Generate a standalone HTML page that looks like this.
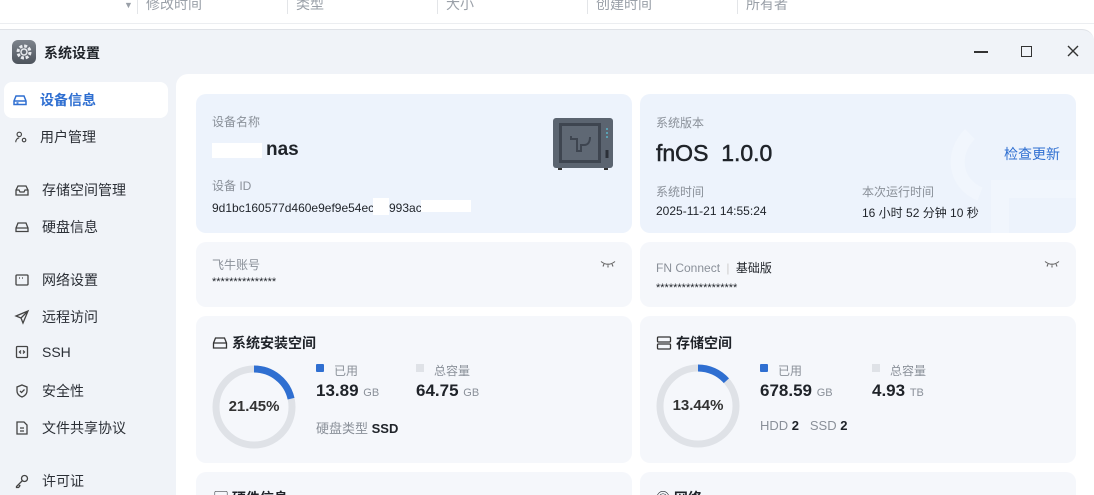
<!DOCTYPE html>
<html><head><meta charset="utf-8"><style>
*{margin:0;padding:0;box-sizing:border-box}
html,body{width:1094px;height:495px;overflow:hidden}
body{background:#fff;font-family:"Liberation Sans","Noto Sans CJK SC",sans-serif;position:relative;color:#1f2329}
.a{position:absolute}
.hd{top:-6px;font-size:14px;color:#9aa0a8}
.sep{top:0;width:1px;height:14px;background:#e3e5e8}
.win{left:0;top:29px;width:1094px;height:466px;background:#f0f3f8;border-top:1px solid #dfe2e7;border-top-right-radius:12px}
.nav{left:14px;font-size:14px;color:#2b2f36;display:flex;align-items:center}
.nav svg{margin-right:12px}
.main{left:176px;top:74px;width:918px;height:421px;background:#fff;border-top-left-radius:12px}
.card{border-radius:10px;background:#f5f7fb}
.blue{background:#edf3fc}
.lb{font-size:12px;color:#8a9099}
.v{font-size:12px;color:#1f2329}
</style></head><body>
<div class="a hd" style="left:146px">修改时间</div>
<div class="a hd" style="left:296px">类型</div>
<div class="a hd" style="left:446px">大小</div>
<div class="a hd" style="left:596px">创建时间</div>
<div class="a hd" style="left:746px">所有者</div>
<div class="a" style="left:124px;top:0;font-size:9px;color:#9aa0a8">▼</div>
<div class="a sep" style="left:137px"></div><div class="a sep" style="left:287px"></div><div class="a sep" style="left:437px"></div><div class="a sep" style="left:587px"></div><div class="a sep" style="left:737px"></div>
<div class="a" style="left:0;top:23px;width:1094px;height:1px;background:#eceef1"></div>
<div class="a win"></div>
<div class="a" style="left:12px;top:40px;width:24px;height:24px;border-radius:6px;background:linear-gradient(#7d838c,#4d535c)"><svg width="24" height="24" viewBox="0 0 24 24"><circle cx="12" cy="12" r="6" fill="none" stroke="#e8eaee" stroke-width="3" stroke-dasharray="3 1.7"/><circle cx="12" cy="12" r="3" fill="none" stroke="#e8eaee" stroke-width="1.5"/></svg></div>
<div class="a" style="left:44px;top:43px;font-size:14px;font-weight:bold">系统设置</div>
<div class="a" style="left:974px;top:51px;width:14px;height:1.5px;background:#333"></div>
<div class="a" style="left:1021px;top:46px;width:11px;height:11px;border:1.3px solid #333"></div>
<svg class="a" style="left:1067px;top:45px" width="12" height="12"><path d="M1 1L11 11M11 1L1 11" stroke="#333" stroke-width="1.4"/></svg>
<div class="a" style="left:4px;top:82px;width:164px;height:36px;background:#fff;border-radius:8px"></div>
<div class="a nav" style="top:90px;left:12px;color:#2f6fd1;font-weight:bold"><svg width="16" height="16" viewBox="0 0 16 16" fill="none" stroke="#2f6fd1" stroke-width="1.5"><path d="M2 9l2-5h8l2 5v3.5H2z M2 9h12"/><path d="M4.5 11h2"/></svg>设备信息</div>
<div class="a nav" style="top:127px"><svg width="14" height="16" viewBox="0 0 16 16" fill="none" stroke="#444" stroke-width="1.3"><circle cx="6" cy="5" r="2.5"/><path d="M2 14c0-3 2-5 4-5"/><circle cx="11.5" cy="11.5" r="2"/></svg>用户管理</div>
<div class="a nav" style="top:180px"><svg width="16" height="16" viewBox="0 0 16 16" fill="none" stroke="#444" stroke-width="1.3"><path d="M2 8l2-4h8l2 4v5H2z M2 8h3l1 2h4l1-2h3"/></svg>存储空间管理</div>
<div class="a nav" style="top:217px"><svg width="16" height="16" viewBox="0 0 16 16" fill="none" stroke="#444" stroke-width="1.3"><path d="M2 9l2-5h8l2 5v3.5H2z M2 9h12"/></svg>硬盘信息</div>
<div class="a nav" style="top:270px"><svg width="16" height="16" viewBox="0 0 16 16" fill="none" stroke="#444" stroke-width="1.3"><rect x="2" y="3" width="12" height="10" rx="1"/><path d="M5 6h1M8 6h1M11 6h0"/></svg>网络设置</div>
<div class="a nav" style="top:307px"><svg width="16" height="16" viewBox="0 0 16 16" fill="none" stroke="#444" stroke-width="1.3"><path d="M14 2L2 7l5 2 2 5z M7 9l7-7"/></svg>远程访问</div>
<div class="a nav" style="top:344px"><svg width="16" height="16" viewBox="0 0 16 16" fill="none" stroke="#444" stroke-width="1.3"><rect x="2.5" y="2.5" width="11" height="11" rx="1"/><path d="M7 6.5L5.5 8 7 9.5M9 6.5L10.5 8 9 9.5"/></svg>SSH</div>
<div class="a nav" style="top:381px"><svg width="16" height="16" viewBox="0 0 16 16" fill="none" stroke="#444" stroke-width="1.3"><path d="M8 2l5 2v4c0 3-2.5 5-5 6-2.5-1-5-3-5-6V4z"/><path d="M6 8l1.5 1.5L10.5 6.5"/></svg>安全性</div>
<div class="a nav" style="top:418px"><svg width="16" height="16" viewBox="0 0 16 16" fill="none" stroke="#444" stroke-width="1.3"><path d="M3 2h7l3 3v9H3z M6 8h4M6 11h4"/></svg>文件共享协议</div>
<div class="a nav" style="top:471px"><svg width="16" height="16" viewBox="0 0 16 16" fill="none" stroke="#444" stroke-width="1.3"><circle cx="10.5" cy="5.5" r="3"/><path d="M8.5 7.5L2.5 13.5v1h2l1-1v-1h1"/></svg>许可证</div>

<div class="a main"></div>
<div class="a card blue" style="left:196px;top:94px;width:436px;height:139px"></div>
<div class="a lb" style="left:212px;top:113px">设备名称</div>
<div class="a" style="left:266px;top:139px;font-size:19px;font-weight:bold">nas</div>
<div class="a" style="left:212px;top:143px;width:50px;height:15px;background:#fff"></div>
<div class="a lb" style="left:212px;top:177px">设备 ID</div>
<div class="a v" style="left:212px;top:201px">9d1bc160577d460e9ef9e54ec</div>
<div class="a" style="left:373px;top:198px;width:16px;height:17px;background:#fff"></div>
<div class="a v" style="left:389px;top:201px">993ac</div>
<div class="a" style="left:421px;top:200px;width:50px;height:12px;background:#fff"></div>
<svg class="a" style="left:550px;top:115px" width="66" height="56" viewBox="0 0 66 56"><rect x="3" y="3" width="60" height="50" rx="3" fill="#5b6470"/><rect x="9" y="8" width="42" height="40" fill="#3e4550"/><rect x="12" y="11" width="36" height="34" fill="#5f6874"/><path d="M21 21v3h6v12h4v-6h3c4 0 6-3 6-8" fill="none" stroke="#3e4550" stroke-width="2"/><circle cx="57" cy="14" r="1" fill="#5ab4c8"/><circle cx="57" cy="18" r="1" fill="#5ab4c8"/><circle cx="57" cy="22" r="1" fill="#5ab4c8"/><rect x="55.5" y="35" width="3" height="8" fill="#2b3038"/><rect x="8" y="53" width="4" height="2" fill="#333"/><rect x="54" y="53" width="4" height="2" fill="#333"/></svg>

<div class="a card blue" style="left:640px;top:94px;width:436px;height:139px;overflow:hidden"><svg class="a" style="left:300px;top:30px" width="140" height="110"><path d="M30 10c-20 20-15 50 10 60" fill="none" stroke="#f1f6fd" stroke-width="14"/><path d="M60 110V65h90" fill="none" stroke="#f1f6fd" stroke-width="18"/></svg></div>
<div class="a lb" style="left:656px;top:114px">系统版本</div>
<div class="a" style="left:656px;top:140px;font-size:23px;-webkit-text-stroke:0.5px #1f2329">fnOS&nbsp; 1.0.0</div>
<div class="a" style="left:1004px;top:144px;font-size:14px;color:#2f6fd1">检查更新</div>
<div class="a lb" style="left:656px;top:183px">系统时间</div>
<div class="a v" style="left:656px;top:204px">2025-11-21 14:55:24</div>
<div class="a lb" style="left:862px;top:183px">本次运行时间</div>
<div class="a v" style="left:862px;top:204px">16 小时 52 分钟 10 秒</div>

<div class="a card" style="left:196px;top:242px;width:436px;height:65px"></div>
<div class="a lb" style="left:212px;top:256px">飞牛账号</div>
<div class="a v" style="left:212px;top:276px;font-size:11px">***************</div>
<svg class="a" style="left:600px;top:260px" width="16" height="8"><path d="M1 1.5Q8 7 15 1.5M4 4L3 6.5M8 5.3V7.5M12 4l1 2.5" fill="none" stroke="#666" stroke-width="1.1"/></svg>
<div class="a card" style="left:640px;top:242px;width:436px;height:65px"></div>
<div class="a lb" style="left:656px;top:259px">FN Connect <span style="color:#ccc;margin:0 3px">|</span> <span style="color:#1f2329">基础版</span></div>
<div class="a v" style="left:656px;top:282px;font-size:11px">*******************</div>
<svg class="a" style="left:1044px;top:260px" width="16" height="8"><path d="M1 1.5Q8 7 15 1.5M4 4L3 6.5M8 5.3V7.5M12 4l1 2.5" fill="none" stroke="#666" stroke-width="1.1"/></svg>

<div class="a card" style="left:196px;top:316px;width:436px;height:147px"></div>
<div class="a" style="left:212px;top:333px;font-size:14px;font-weight:bold;display:flex;align-items:center"><svg width="16" height="14" viewBox="0 0 16 14" fill="none" stroke="#333" stroke-width="1.3" style="margin-right:4px"><path d="M1.5 7l2-5h9l2 5v5h-13z M1.5 7h13"/></svg>系统安装空间</div>
<svg class="a" style="left:212px;top:365px" width="84" height="84"><circle cx="42" cy="42" r="38" fill="none" stroke="#dfe2e7" stroke-width="7"/><circle cx="42" cy="42" r="38" fill="none" stroke="#2f6fd1" stroke-width="7" stroke-dasharray="51.2 300" transform="rotate(-90 42 42)"/></svg>
<div class="a" style="left:212px;top:398px;width:84px;text-align:center;font-size:15px;font-weight:bold;color:#333">21.45%</div>
<div class="a" style="left:316px;top:364px;width:8px;height:8px;background:#2f6fd1;border-radius:1px"></div>
<div class="a lb" style="left:334px;top:362px">已用</div>
<div class="a" style="left:316px;top:381px;font-size:17px;font-weight:bold">13.89 <span style="font-size:11px;color:#8a9099;font-weight:normal">GB</span></div>
<div class="a" style="left:416px;top:364px;width:8px;height:8px;background:#dfe2e7"></div>
<div class="a lb" style="left:434px;top:362px">总容量</div>
<div class="a" style="left:416px;top:381px;font-size:17px;font-weight:bold">64.75 <span style="font-size:11px;color:#8a9099;font-weight:normal">GB</span></div>
<div class="a" style="left:316px;top:418px;font-size:13px;color:#8a9099">硬盘类型 <span style="color:#1f2329;font-weight:bold">SSD</span></div>

<div class="a card" style="left:640px;top:316px;width:436px;height:147px"></div>
<div class="a" style="left:656px;top:333px;font-size:14px;font-weight:bold;display:flex;align-items:center"><svg width="16" height="14" viewBox="0 0 16 14" fill="none" stroke="#333" stroke-width="1.3" style="margin-right:4px"><rect x="1.5" y="1" width="13" height="5" rx="1"/><rect x="1.5" y="8" width="13" height="5" rx="1"/></svg>存储空间</div>
<svg class="a" style="left:656px;top:364px" width="84" height="84"><circle cx="42" cy="42" r="38" fill="none" stroke="#dfe2e7" stroke-width="7"/><circle cx="42" cy="42" r="38" fill="none" stroke="#2f6fd1" stroke-width="7" stroke-dasharray="32 300" transform="rotate(-90 42 42)"/></svg>
<div class="a" style="left:656px;top:397px;width:84px;text-align:center;font-size:15px;font-weight:bold;color:#333">13.44%</div>
<div class="a" style="left:760px;top:364px;width:8px;height:8px;background:#2f6fd1;border-radius:1px"></div>
<div class="a lb" style="left:778px;top:362px">已用</div>
<div class="a" style="left:760px;top:381px;font-size:17px;font-weight:bold">678.59 <span style="font-size:11px;color:#8a9099;font-weight:normal">GB</span></div>
<div class="a" style="left:872px;top:364px;width:8px;height:8px;background:#dfe2e7"></div>
<div class="a lb" style="left:890px;top:362px">总容量</div>
<div class="a" style="left:872px;top:381px;font-size:17px;font-weight:bold">4.93 <span style="font-size:11px;color:#8a9099;font-weight:normal">TB</span></div>
<div class="a" style="left:760px;top:418px;font-size:13px;color:#8a9099">HDD <b style="color:#1f2329">2</b>&nbsp;&nbsp; SSD <b style="color:#1f2329">2</b></div>

<div class="a card" style="left:196px;top:472px;width:436px;height:40px"></div>
<div class="a" style="left:214px;top:488px;font-size:14px;font-weight:bold">▢ 硬件信息</div>
<div class="a card" style="left:640px;top:472px;width:436px;height:40px"></div>
<div class="a" style="left:656px;top:488px;font-size:14px;font-weight:bold">◎ 网络</div>
</body></html>
